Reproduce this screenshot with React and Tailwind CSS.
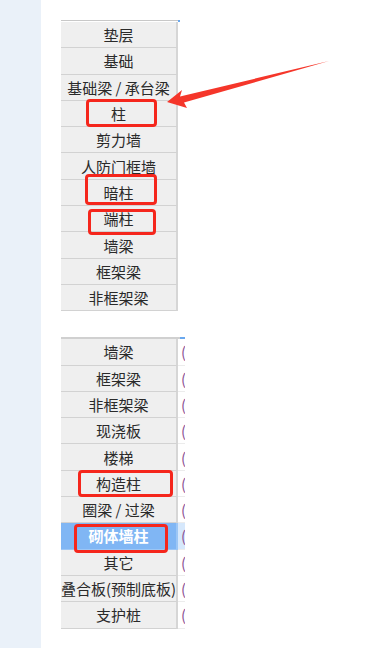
import React from 'react';

const firstList = ['垫层', '基础', '基础梁 / 承台梁', '柱', '剪力墙', '人防门框墙', '暗柱', '端柱', '墙梁', '框架梁', '非框架梁'];
const secondList = ['墙梁', '框架梁', '非框架梁', '现浇板', '楼梯', '构造柱', '圈梁 / 过梁', '砌体墙柱', '其它', '叠合板(预制底板)', '支护桩'];

// 截图上的红框标注
function Mark({ className }) {
  return <div className={`absolute border-[3px] border-[#f5261c] rounded-[4px] ${className}`} />;
}

function Row({ label, selected, withSide }) {
  return (
    <div className="flex h-[26.3px]">
      <div
        className={`w-[117px] shrink-0 flex items-center justify-center border-b border-r-2 whitespace-nowrap ${
          selected
            ? 'bg-[#80b6f4] text-white font-bold border-b-[#9cc6f5] border-r-[#9cc6f5]'
            : 'bg-[#efefef] text-[#2a2a2a] border-b-[#d2d2d2] border-r-[#d6d6d6]'
        }`}
      >
        {label}
      </div>
      {withSide && (
        <div
          className={`flex-1 flex items-center pl-[3px] text-[#8a4f92] border-b border-[#ececec] overflow-hidden ${
            selected ? 'bg-[#d6e8fc]' : 'bg-white'
          }`}
        >
          (
        </div>
      )}
    </div>
  );
}

export default function App() {
  return (
    <div
      className="relative flex w-[392px] h-[648px] bg-white overflow-hidden text-[15px] leading-none"
      style={{ fontFamily: '"Noto Sans CJK SC", "Noto Sans", sans-serif' }}
    >
      <div className="w-[41px] shrink-0 bg-[#eaf1f9]" />

      <div className="flex flex-col pl-[20px] pt-[20px] gap-[26px]">
        {/* 上面的列表 */}
        <div className="relative w-[119px]">
          <div className="flex">
            <div className="w-[117px] border-t border-[#c8c8c8]" />
            <div className="w-[2px] h-[2px] bg-[#6aa8ee]" />
          </div>
          {firstList.map((t) => (
            <Row key={t} label={t} />
          ))}
          <Mark className="left-[25px] top-[79px] w-[71px] h-[28px]" />
          <Mark className="left-[24px] top-[154px] w-[72px] h-[31px]" />
          <Mark className="left-[27px] top-[189px] w-[68px] h-[26px]" />
        </div>

        {/* 下面的列表 */}
        <div className="relative w-[124px]">
          <div className="flex h-[2px]">
            <div className="w-[119px] bg-[#d0d0d0]" />
            <div className="flex-1 bg-[#6aa8ee]" />
          </div>
          {secondList.map((t) => (
            <Row key={t} label={t} selected={t === '砌体墙柱'} withSide />
          ))}
          <Mark className="left-[17px] top-[133px] w-[95px] h-[27px]" />
          <Mark className="left-[13px] top-[187px] w-[94px] h-[29px]" />
        </div>
      </div>

      {/* 红色箭头 */}
      <svg className="absolute left-0 top-0" width="392" height="648" viewBox="0 0 392 648">
        <polygon
          points="167,102 182,90 180,96.5 329,61 184,102.5 187,108"
          fill="#f5362a"
        />
      </svg>
    </div>
  );
}
